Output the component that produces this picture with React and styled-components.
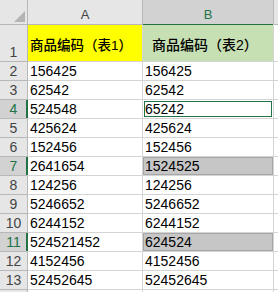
import React from 'react'
import styled, {createGlobalStyle, css} from 'styled-components'

const rows = [
  ['156425', '156425'],
  ['62542', '62542'],
  ['524548', '65242', 'active'],
  ['425624', '425624'],
  ['152456', '152456'],
  ['2641654', '1524525', 'marked'],
  ['124256', '124256'],
  ['5246652', '5246652'],
  ['6244152', '6244152'],
  ['524521452', '624524', 'marked'],
  ['4152456', '4152456'],
  ['52452645', '52452645'],
]

const GlobalStyle = createGlobalStyle`
  html, body {
    margin: 0;
    padding: 0;
    background: #ffffff;
    overflow: hidden;
  }
`

export default function App() {
  return (
    <>
      <GlobalStyle/>
      <Sheet>
        <Corner>
          <svg width="11" height="11" viewBox="0 0 11 11">
            <polygon points="11,0 11,11 0,11" fill="#b4b4b4"/>
          </svg>
        </Corner>
        <ColHead>A</ColHead>
        <ColHead $selected>B</ColHead>
        <ColHead/>

        <RowHead>1</RowHead>
        <TitleCell $fill="#ffff00" $size={13.5}>商品编码（表1）</TitleCell>
        <TitleCell $fill="#c6e0b4" $size={14} $indent={9}>商品编码（表2）</TitleCell>
        <Cell/>

        {rows.map(([a, b, state], i) => (
          <React.Fragment key={i}>
            <RowHead $selected={!!state}>{i + 2}</RowHead>
            <Cell>{a}</Cell>
            <Cell $state={state}>{b}</Cell>
            <Cell/>
          </React.Fragment>
        ))}
        <RowHead/>
        <Cell/>
        <Cell/>
        <Cell/>
      </Sheet>
    </>
  )
}

const Sheet = styled.div`
  display: grid;
  grid-template-columns: 27px 114px 130px 40px;
  grid-template-rows: 24px 36px repeat(13, 18px);
  gap: 1px;
  width: 278px;
  height: 292px;
  overflow: hidden;
  background: #d4d4d4;
  font-family: "Liberation Sans", "Noto Sans CJK SC", sans-serif;
  color: #000000;
`

const headBase = css`
  background: #e6e6e6;
  box-shadow: 1px 0 0 #b8b8b8, 0 1px 0 #b8b8b8, 1px 1px 0 #b8b8b8;
  color: #444444;
`

const Corner = styled.div`
  ${headBase};
  display: flex;
  align-items: flex-end;
  justify-content: flex-end;
  padding: 0 2px 2px 0;
  box-sizing: border-box;
  svg { display: block; }
`

const ColHead = styled.div`
  ${headBase};
  display: flex;
  align-items: flex-end;
  justify-content: center;
  font-size: 13px;
  line-height: 17px;
  padding-bottom: 1px;
  box-sizing: border-box;
  ${p => p.$selected && css`
    background: #d2d2d2;
    color: #217346;
    box-shadow: 1px 0 0 #b8b8b8, 0 1px 0 #217346, 0 2px 0 #217346;
  `}
`

const RowHead = styled.div`
  ${headBase};
  display: flex;
  align-items: flex-end;
  justify-content: center;
  font-size: 14px;
  line-height: 17px;
  ${p => p.$selected && css`
    background: #d2d2d2;
    color: #217346;
    box-shadow: 1px 0 0 #217346, 0 1px 0 #b8b8b8, inset -1px 0 0 #217346;
  `}
`

const Cell = styled.div`
  background: #ffffff;
  display: flex;
  align-items: flex-end;
  padding-left: 2px;
  font-size: 14px;
  line-height: 17px;
  white-space: nowrap;
  ${p => p.$state === 'active' && css`
    outline: 1px solid #217346;
    outline-offset: -2px;
  `}
  ${p => p.$state === 'marked' && css`
    background: #c6c6c6;
    box-shadow: inset 0 0 0 1px #a6a6a6;
  `}
`

const TitleCell = styled.div`
  background: ${p => p.$fill};
  display: flex;
  align-items: center;
  padding-left: ${p => p.$indent || 2}px;
  padding-top: 2px;
  font-size: ${p => p.$size}px;
  font-weight: 500;
  color: #000000;
  white-space: nowrap;
`
